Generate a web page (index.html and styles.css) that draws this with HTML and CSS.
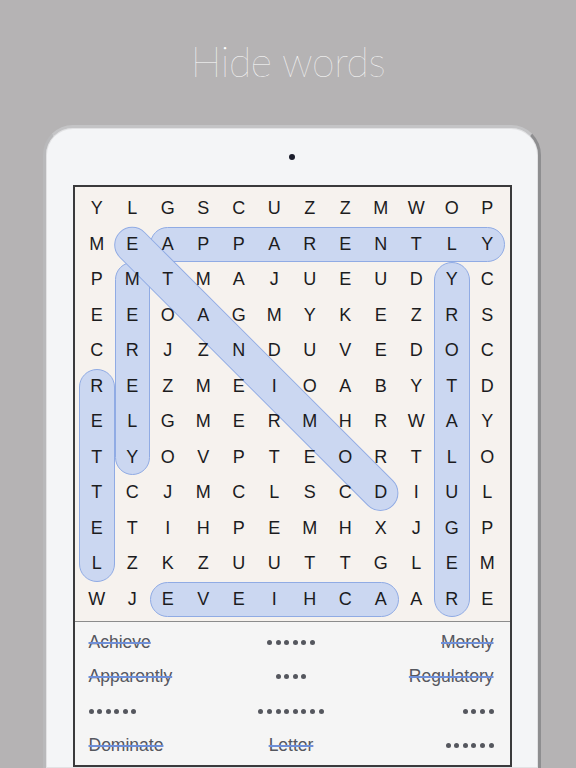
FILE: index.html
```html
<!DOCTYPE html>
<html>
<head>
<meta charset="utf-8">
<link rel="stylesheet" href="styles.css">
</head>
<body>
<div class="page">
  <h1 class="title">Hide words</h1>
  <div class="device">
    <div class="face">
      <div class="camera"></div>
      <div class="panel">
        <div class="board">
          <div class="marks">
            <div class="cap" style="left:calc(var(--c)*2);top:calc(var(--c)*1);width:calc(var(--c)*10);height:var(--c)"></div>
            <div class="cap" style="left:calc(var(--c)*1);top:calc(var(--c)*2);width:var(--c);height:calc(var(--c)*6)"></div>
            <div class="cap" style="left:0;top:calc(var(--c)*5);width:var(--c);height:calc(var(--c)*6)"></div>
            <div class="cap" style="left:calc(var(--c)*10);top:calc(var(--c)*2);width:var(--c);height:calc(var(--c)*10)"></div>
            <div class="cap" style="left:calc(var(--c)*2);top:calc(var(--c)*11);width:calc(var(--c)*7);height:var(--c)"></div>
            <div class="cap diag"></div>
          </div>
          <div class="grid" id="grid"></div>
        </div>
        <div class="words">
          <div class="w left"><span class="found">Achieve</span></div>
          <div class="w mid"><span class="dots"><i></i><i></i><i></i><i></i><i></i><i></i></span></div>
          <div class="w right"><span class="found">Merely</span></div>

          <div class="w left"><span class="found">Apparently</span></div>
          <div class="w mid"><span class="dots"><i></i><i></i><i></i><i></i></span></div>
          <div class="w right"><span class="found">Regulatory</span></div>

          <div class="w left"><span class="dots"><i></i><i></i><i></i><i></i><i></i><i></i></span></div>
          <div class="w mid"><span class="dots"><i></i><i></i><i></i><i></i><i></i><i></i><i></i><i></i></span></div>
          <div class="w right"><span class="dots"><i></i><i></i><i></i><i></i></span></div>

          <div class="w left"><span class="found">Dominate</span></div>
          <div class="w mid"><span class="found">Letter</span></div>
          <div class="w right"><span class="dots"><i></i><i></i><i></i><i></i><i></i><i></i></span></div>
        </div>
      </div>
    </div>
  </div>
</div>
<script>
var rows = ["YLGSCUZZMWOP","MEAPPARENTLY","PMTMAJUEUDYC","EEOAGMYKEZRS","CRJZNDUVEDOC","REZMEIOABYTD","ELGMERMHRWAY","TYOVPTEORTLO","TCJMCLSCDIUL","ETIHPEMHXJGP","LZKZUUTTGLEM","WJEVEIHCAARE"];
var g = document.getElementById("grid");
rows.forEach(function(r){ r.split("").forEach(function(ch){ var s=document.createElement("span"); s.className="cell"; s.textContent=ch; g.appendChild(s); }); });
</script>
</body>
</html>
```
FILE: styles.css
```css
html, body { margin: 0; padding: 0; }
body {
  background: #b5b3b4;
  width: 576px;
  height: 768px;
  overflow: hidden;
  font-family: "Liberation Sans", Arial, sans-serif;
}
.page { display: flex; flex-direction: column; align-items: center; }
.title {
  margin: 37px 0 0 0;
  height: 88px;
  font-family: "Lato", "Liberation Sans", sans-serif;
  font-weight: 100;
  font-size: 41px;
  line-height: 50px;
  color: #ffffff;
  letter-spacing: -0.4px;
}
.device {
  box-sizing: border-box;
  width: 498px;
  height: 643px;
  margin-left: 8px;
  border: 3px solid #a9a9ab;
  border-bottom: none;
  border-left-color: #b9b9bb;
  border-right-color: #8e8e90;
  border-top-color: #c4c4c6;
  border-radius: 30px 30px 0 0;
  background: #f4f5f7;
  box-shadow: inset 0 0 0 1px #e2e2e4;
  overflow: hidden;
}
.face { display: flex; flex-direction: column; align-items: center; padding-top: 26px; }
.camera { width: 6px; height: 6px; border-radius: 50%; background: #1b1d2c; }
.panel {
  margin-top: 25px;
  width: 435px;
  border: 2px solid #3a3a3c;
  background: #f5f5f5;
}
.board {
  --c: 35.5px;
  position: relative;
  padding: 4px 4.5px 4px 4.5px;
  background: #f6f2ee;
}
.marks { position: absolute; left: 4.5px; top: 4px; width: 426px; height: 426px; }
.cap {
  position: absolute;
  box-sizing: border-box;
  background: #cbd7f1;
  border: 1px solid #90abe4;
  border-radius: 18px;
}
.diag {
  width: calc(var(--c) * 7 * 1.41421 + var(--c));
  height: var(--c);
  left: calc(var(--c) * 5 - (var(--c) * 7 * 1.41421 + var(--c)) / 2);
  top: calc(var(--c) * 5 - var(--c) / 2);
  transform: rotate(45deg);
}
.grid {
  position: relative;
  display: grid;
  grid-template-columns: repeat(12, 35.5px);
  grid-auto-rows: 35.5px;
}
.cell {
  display: flex;
  align-items: center;
  justify-content: center;
  font-size: 18px;
  color: #1c1c1e;
}
.words {
  border-top: 1px solid #8c8c8c;
  display: grid;
  grid-template-columns: 1fr 1fr 1fr;
  grid-auto-rows: 34.5px;
  padding: 3px 16px 2px 14px;
  background: #f5f5f5;
}
.w { display: flex; align-items: center; font-size: 17.5px; color: #55575e; }
.left { justify-content: flex-start; }
.mid { justify-content: center; }
.right { justify-content: flex-end; }
.found {
  text-decoration: line-through;
  text-decoration-color: #6f8fd8;
  text-decoration-thickness: 1.5px;
}
.dots { display: inline-flex; gap: 3.6px; }
.dots i { display: block; width: 5px; height: 5px; border-radius: 50%; background: #55575e; }
```
